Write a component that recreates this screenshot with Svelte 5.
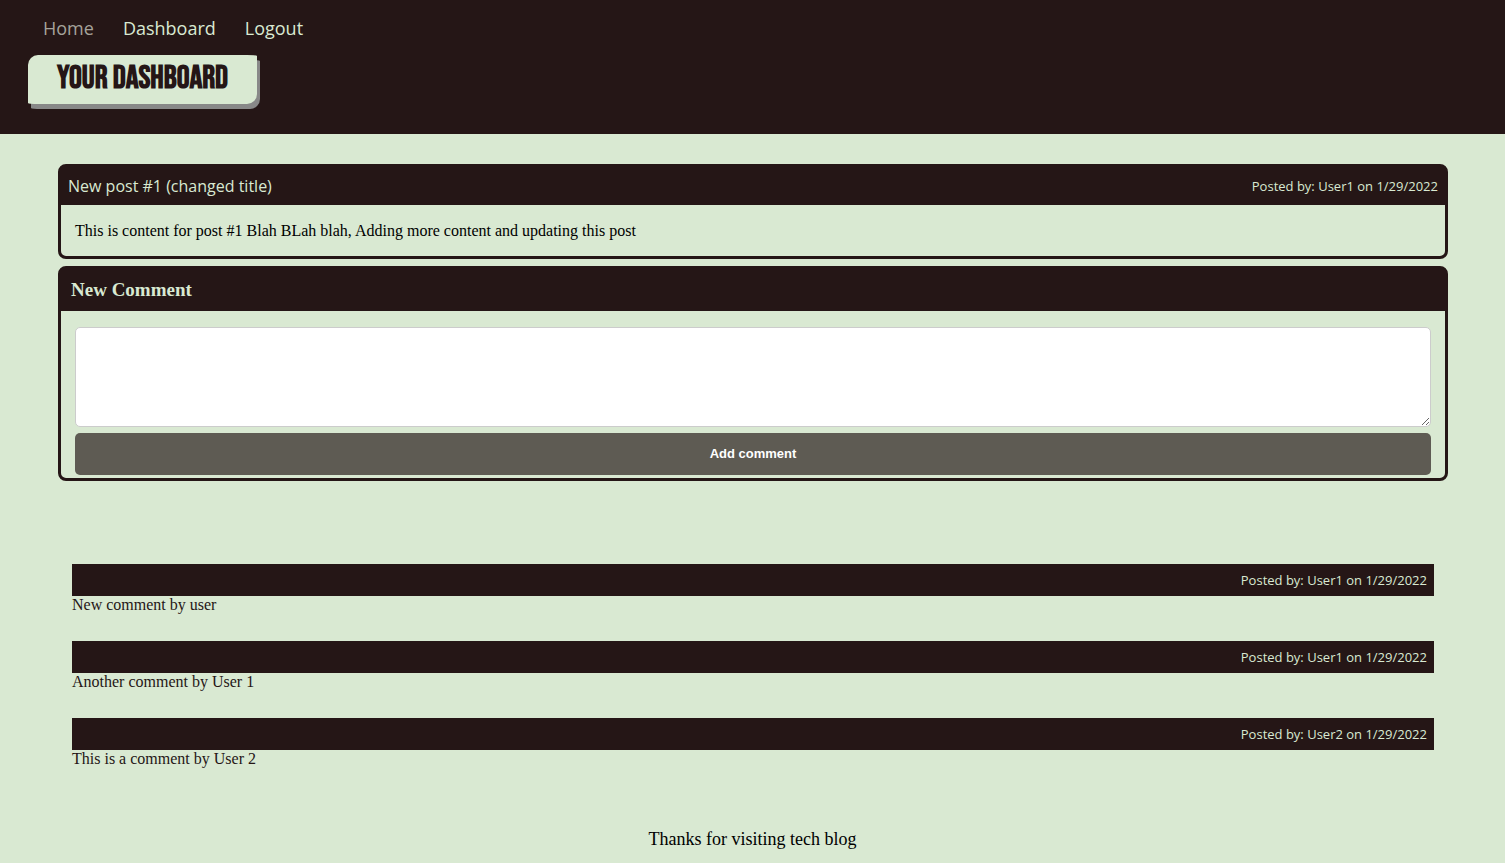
<script>
  const links = ['Home', 'Dashboard', 'Logout'];
  const comments = [
    { author: 'User1', date: '1/29/2022', text: 'New comment by user' },
    { author: 'User1', date: '1/29/2022', text: 'Another comment by User 1' },
    { author: 'User2', date: '1/29/2022', text: 'This is a comment by User 2' }
  ];
  let draft = $state('');
</script>

<header>
  <nav>
    {#each links as link, i}
      <a href="#{link.toLowerCase()}" class:muted={i === 0}>{link}</a>
    {/each}
  </nav>
  <h1>YOUR DASHBOARD</h1>
</header>

<main>
  <article class="card">
    <div class="card-head post-head">
      <a class="post-title" href="#post">New post #1 (changed title)</a>
      <span class="meta">Posted by: User1 on 1/29/2022</span>
    </div>
    <p class="post-body">This is content for post #1 Blah BLah blah, Adding more content and updating this post</p>
  </article>

  <form class="card" onsubmit={(e) => e.preventDefault()}>
    <div class="card-head comment-head"><label for="comment">New Comment</label></div>
    <div class="fields">
      <textarea id="comment" bind:value={draft}></textarea>
      <button type="submit">Add comment</button>
    </div>
  </form>

  <section class="comments">
    {#each comments as comment}
      <article>
        <div class="bar"><span class="meta">Posted by: {comment.author} on {comment.date}</span></div>
        <p>{comment.text}</p>
      </article>
    {/each}
  </section>
</main>

<footer>Thanks for visiting tech blog</footer>

<style>
  :global(body) {
    background: #d9e9d2;
    color: #000;
    font-family: 'Liberation Serif', 'Times New Roman', serif;
  }
  header {
    background: #251616;
    padding: 16px 28px 30px;
    display: flex;
    flex-direction: column;
    align-items: flex-start;
    gap: 15px;
  }
  nav {
    display: flex;
    gap: 29px;
    padding-left: 15px;
    font: 18px/24px 'Open Sans', sans-serif;
  }
  nav a {
    color: #d9e9d2;
    text-decoration: none;
  }
  nav a.muted {
    color: #a5a39b;
  }
  h1 {
    margin: 0;
    padding: 0 29px 2px;
    background: #d9e9d2;
    color: #251616;
    font: bold 32px/47px 'Bebas Neue', 'Liberation Sans Narrow', 'Liberation Sans', sans-serif;
    border-radius: 10px 10px 10px 10px / 10px 1px 10px 1px;
    box-shadow: 3px 5px #888;
  }
  main {
    padding: 30px 57px 0 58px;
  }
  .card {
    border: 3px solid #251616;
    border-radius: 8px;
    margin-bottom: 7px;
  }
  .card-head {
    background: #251616;
    color: #d9e9d2;
    display: flex;
    align-items: center;
    justify-content: space-between;
  }
  .post-head {
    height: 38px;
    padding: 0 7px;
  }
  .post-title {
    font: 16px/24px 'Open Sans', sans-serif;
    color: #d9e9d2;
    text-decoration: none;
  }
  .meta {
    font: 13px/18px 'Open Sans', sans-serif;
    color: #d9e9d2;
  }
  .post-body {
    margin: 0;
    padding: 17px 14px 16px;
    font-size: 16px;
    line-height: 18px;
  }
  .comment-head {
    height: 42px;
    padding: 0 10px;
    font-size: 19px;
    font-weight: bold;
  }
  .fields {
    display: flex;
    flex-direction: column;
    gap: 6px;
    padding: 16px 14px 3px;
  }
  textarea {
    height: 100px;
    box-sizing: border-box;
    border: 1px solid #ccc;
    border-radius: 5px;
    padding: 12px;
    background: #fff;
    resize: vertical;
  }
  button {
    height: 42px;
    padding: 0 0 2px;
    border: 0;
    border-radius: 5px;
    background: #5e5b53;
    color: #fff;
    font: bold 13px/15px 'Liberation Sans', Arial, sans-serif;
  }
  .comments {
    padding: 76px 14px 0;
    display: flex;
    flex-direction: column;
    gap: 27px;
    color: #251616;
  }
  .bar {
    display: flex;
    align-items: center;
    justify-content: flex-end;
    height: 32px;
    padding: 0 7px;
    background: #251616;
  }
  .comments p {
    margin: 0;
    font-size: 16px;
    line-height: 18px;
  }
  footer {
    padding: 61px 0 14px;
    text-align: center;
    font-size: 18px;
    line-height: 20px;
  }
</style>
